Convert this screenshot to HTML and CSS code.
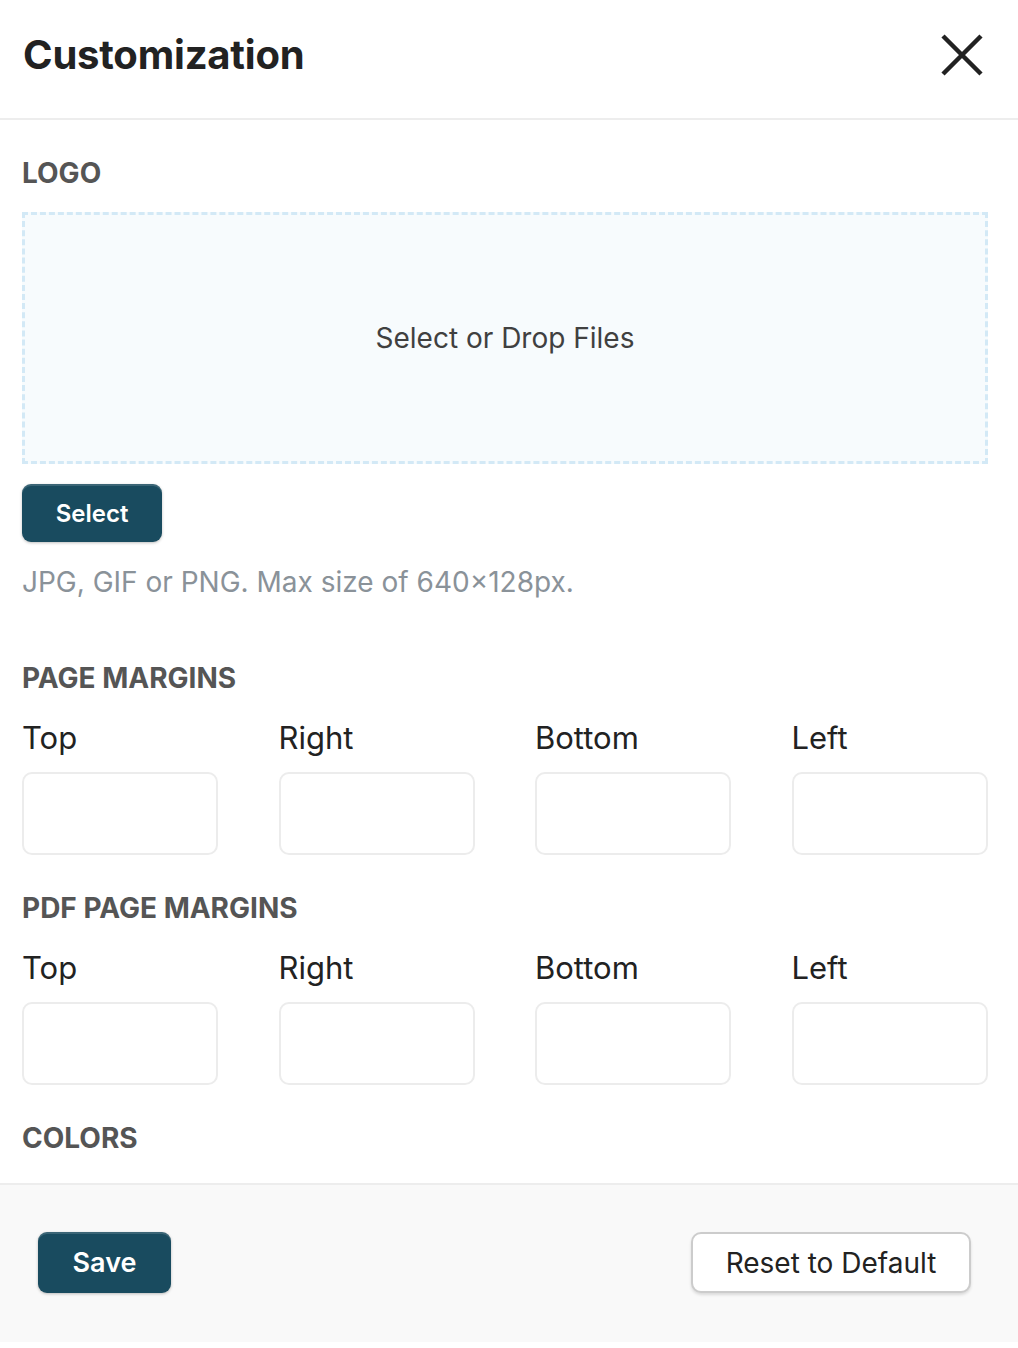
FILE: index.html
```html
<!DOCTYPE html>
<html lang="en">
<head>
<meta charset="utf-8">
<title>Customization</title>
<link rel="stylesheet" href="styles.css">
</head>
<body>
<div class="panel">
  <header class="panel-header">
    <h1 class="panel-title">Customization</h1>
    <button class="close-btn" aria-label="Close">
      <svg width="42" height="42" viewBox="0 0 42 42"><path d="M2 2 L40 40 M40 2 L2 40" stroke="#222" stroke-width="4.5" fill="none"/></svg>
    </button>
  </header>
  <main class="panel-body">
    <section class="section section-logo">
      <h2 class="section-title">LOGO</h2>
      <div class="dropzone">Select or Drop Files</div>
      <button class="btn btn-primary btn-select">Select</button>
      <p class="help">JPG, GIF or PNG. Max size of 640×128px.</p>
    </section>
    <section class="section">
      <h2 class="section-title">PAGE MARGINS</h2>
      <div class="grid">
        <label class="field"><span class="field-label">Top</span><input class="input" type="text"></label>
        <label class="field"><span class="field-label">Right</span><input class="input" type="text"></label>
        <label class="field"><span class="field-label">Bottom</span><input class="input" type="text"></label>
        <label class="field"><span class="field-label">Left</span><input class="input" type="text"></label>
      </div>
    </section>
    <section class="section">
      <h2 class="section-title">PDF PAGE MARGINS</h2>
      <div class="grid">
        <label class="field"><span class="field-label">Top</span><input class="input" type="text"></label>
        <label class="field"><span class="field-label">Right</span><input class="input" type="text"></label>
        <label class="field"><span class="field-label">Bottom</span><input class="input" type="text"></label>
        <label class="field"><span class="field-label">Left</span><input class="input" type="text"></label>
      </div>
    </section>
    <section class="section">
      <h2 class="section-title">COLORS</h2>
    </section>
  </main>
  <footer class="panel-footer">
    <button class="btn btn-primary btn-save">Save</button>
    <button class="btn btn-secondary">Reset to Default</button>
  </footer>
</div>
</body>
</html>
```

FILE: styles.css
```css
* { box-sizing: border-box; }
html, body { margin: 0; padding: 0; background: #fff; }
body { font-family: Inter, "Noto Sans", sans-serif; color: #222; }

.panel { width: 1018px; }

.panel-header {
  display: flex;
  align-items: flex-start;
  justify-content: space-between;
  height: 120px;
  padding: 31px 35px 0 23px;
  border-bottom: 2px solid #ededed;
}
.panel-title {
  margin: 0;
  font-size: 40px;
  line-height: 48px;
  font-weight: 700;
  color: #222;
  letter-spacing: -0.2px;
}
.close-btn {
  margin-top: 3px;
  border: 0; background: none; padding: 0; width: 42px; height: 42px;
  display: flex; align-items: center; justify-content: center;
}

.panel-body { padding: 33px 30px 28px 22px; }
.section-title {
  margin: 0;
  padding-top: 3px;
  font-size: 28px;
  line-height: 34px;
  font-weight: 700;
  color: #555;
}

.dropzone {
  margin-top: 22px;
  height: 252px;
  border: 3px dashed #d3e9f6;
  background: #f7fbfd;
  display: flex; align-items: center; justify-content: center;
  font-size: 28px;
  color: #404040;
}
.btn {
  font-family: inherit;
  border-radius: 9px;
  cursor: pointer;
}
.btn-primary {
  background: #194b5f;
  color: #fff;
  border: 0;
  font-weight: 600;
  box-shadow: 0 1px 3px rgba(0,0,0,0.25), inset 0 2px 0 rgba(255,255,255,0.15);
}
.btn-select {
  margin-top: 20px;
  width: 140px; height: 58px;
  font-size: 24px;
  display: block;
}
.help {
  margin: 23px 0 0;
  font-size: 28px;
  line-height: 34px;
  color: #8a9299;
}
.section-logo { padding-bottom: 59px; }

.grid {
  margin-top: 24px;
  margin-bottom: 33px;
  display: grid;
  grid-template-columns: repeat(4, 196px);
  column-gap: 60.5px;
}
.field { display: flex; flex-direction: column; }
.field-label {
  font-size: 31px;
  line-height: 38px;
  color: #222;
}
.input {
  margin-top: 15px;
  height: 83px;
  border: 2px solid #ececec;
  border-radius: 10px;
  background: #fff;
  font: inherit;
}

.panel-footer {
  background: #f9f9f9;
  border-top: 2px solid #ededed;
  height: 159px;
  display: flex;
  align-items: flex-start;
  justify-content: space-between;
  padding: 47px 47px 0 38px;
}
.btn-save {
  width: 133px; height: 61px;
  font-size: 27px;
}
.btn-secondary {
  width: 280px; height: 61px;
  background: #fff;
  border: 2px solid #cccccc;
  border-radius: 10px;
  color: #222;
  font-size: 28px;
  font-weight: 400;
  box-shadow: 0 2px 3px rgba(0,0,0,0.12);
}
```
